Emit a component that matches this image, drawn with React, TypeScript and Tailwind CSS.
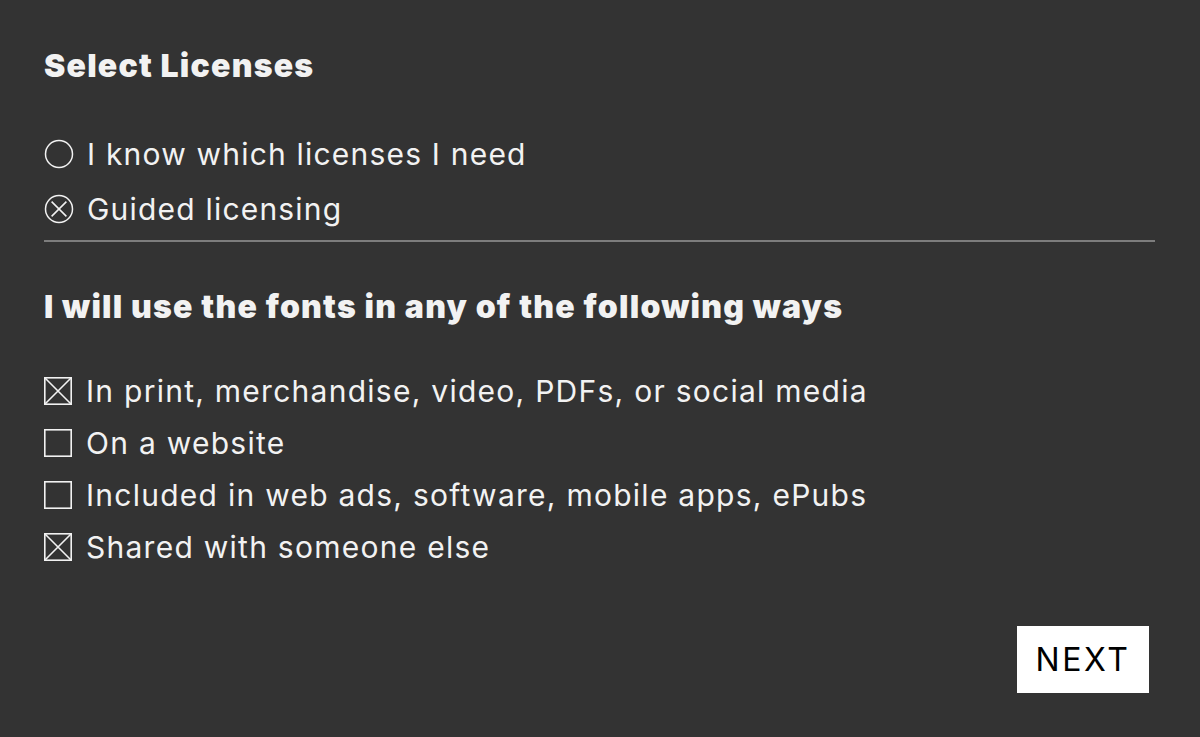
import { useState } from 'react';

const licenseModes = ['I know which licenses I need', 'Guided licensing'];

const usages = [
  'In print, merchandise, video, PDFs, or social media',
  'On a website',
  'Included in web ads, software, mobile apps, ePubs',
  'Shared with someone else',
];

function RadioMark({ checked }: { checked: boolean }) {
  return (
    <svg width="30" height="30" viewBox="0 0 30 30" className="shrink-0" aria-hidden="true">
      <circle cx="15" cy="15" r="13.5" fill="none" stroke="#f2f2f2" strokeWidth="1.5" />
      {checked && (
        <path d="M7.6 7.6 L22.4 22.4 M22.4 7.6 L7.6 22.4" stroke="#f2f2f2" strokeWidth="1.5" />
      )}
    </svg>
  );
}

function CheckMark({ checked }: { checked: boolean }) {
  return (
    <svg width="28" height="28" viewBox="0 0 28 28" className="shrink-0" aria-hidden="true">
      <rect x="0.8" y="0.8" width="26.4" height="26.4" fill="none" stroke="#f2f2f2" strokeWidth="1.6" />
      {checked && <path d="M1 1 L27 27 M27 1 L1 27" stroke="#f2f2f2" strokeWidth="1.6" />}
    </svg>
  );
}

export default function App() {
  const [mode, setMode] = useState(1);
  const [selected, setSelected] = useState<boolean[]>([true, false, false, true]);

  const toggle = (i: number) =>
    setSelected((prev) => prev.map((v, j) => (j === i ? !v : v)));

  return (
    <div
      className="min-h-[737px] w-full bg-[#333333] px-[44px] pt-[46px] text-[#f2f2f2]"
      style={{ fontFamily: 'Inter, "Noto Sans", sans-serif' }}
    >
      <h2 className="text-[32px] leading-[40px] font-black tracking-[0.038em]">Select Licenses</h2>

      <div className="mt-[40px]">
        {licenseModes.map((label, i) => (
          <button
            key={label}
            onClick={() => setMode(i)}
            className="flex h-[55px] items-center gap-[13px] text-[30px] leading-none tracking-[0.04em]"
          >
            <RadioMark checked={mode === i} />
            <span>{label}</span>
          </button>
        ))}
      </div>

      <div className="mr-[1px] mt-[4px] h-[2px] bg-[#7d7d7d]" />

      <h2 className="mt-[45px] text-[32px] leading-[40px] font-black tracking-[0.038em]">
        I will use the fonts in any of the following ways
      </h2>

      <div className="mt-[38px]">
        {usages.map((label, i) => (
          <button
            key={label}
            onClick={() => toggle(i)}
            className="flex h-[52px] items-center gap-[14px] text-[30px] leading-none tracking-[0.042em]"
          >
            <CheckMark checked={selected[i]} />
            <span>{label}</span>
          </button>
        ))}
      </div>

      <div className="mt-[53px] flex justify-end pr-[7px]">
        <button className="h-[67px] w-[132px] bg-white text-[32px] tracking-[0.08em] text-black">
          NEXT
        </button>
      </div>
    </div>
  );
}
